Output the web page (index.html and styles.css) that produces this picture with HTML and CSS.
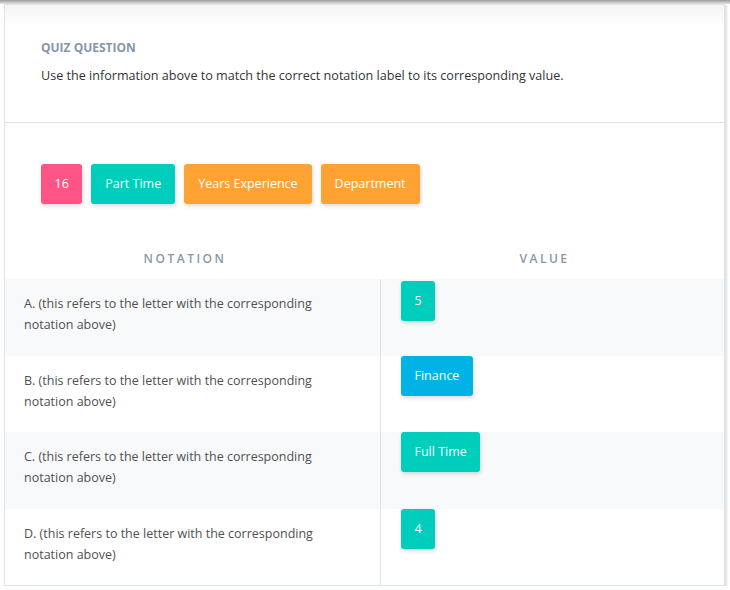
FILE: index.html
```html
<!DOCTYPE html>
<html>
<head>
<meta charset="utf-8">
<link rel="stylesheet" href="styles.css">
</head>
<body>
<div class="topshade"></div>
<div class="card">
  <div class="question">
    <div class="qlabel">QUIZ QUESTION</div>
    <div class="qtext">Use the information above to match the correct notation label to its corresponding value.</div>
  </div>
  <div class="answers">
    <div class="chips">
      <span class="chip pink">16</span>
      <span class="chip teal">Part Time</span>
      <span class="chip orange">Years Experience</span>
      <span class="chip orange">Department</span>
    </div>
    <div class="table">
      <div class="th">NOTATION</div>
      <div class="th">VALUE</div>

      <div class="cell label alt">A. (this refers to the letter with the corresponding notation above)</div>
      <div class="cell value alt first"><span class="chip teal">5</span></div>

      <div class="cell label">B. (this refers to the letter with the corresponding notation above)</div>
      <div class="cell value"><span class="chip blue">Finance</span></div>

      <div class="cell label alt">C. (this refers to the letter with the corresponding notation above)</div>
      <div class="cell value alt"><span class="chip teal">Full Time</span></div>

      <div class="cell label">D. (this refers to the letter with the corresponding notation above)</div>
      <div class="cell value"><span class="chip teal">4</span></div>
    </div>
  </div>
</div>
</body>
</html>
```
FILE: styles.css
```css
html, body {
  margin: 0;
  padding: 0;
  background: #ffffff;
  font-family: "Open Sans", "Liberation Sans", sans-serif;
}
.topshade {
  height: 4px;
  background: linear-gradient(#9a9a9a, #e4e4e4);
}
.card {
  margin: 0 5px 0 4px;
  border: 1px solid #dde3ea;
  box-shadow: 2px 1px 2px rgba(0,0,0,0.12);
}
.question {
  padding: 35px 36px 36px;
  background: linear-gradient(#f4f4f4 0px, #ffffff 22px);
  border-bottom: 1px solid #dde3ea;
}
.qlabel {
  font-size: 12px;
  font-weight: 700;
  line-height: 16px;
  color: #8396ab;
}
.qtext {
  margin-top: 10px;
  font-size: 12.6px;
  line-height: 20px;
  color: #333333;
}
.answers {
  padding-top: 41px;
}
.chips {
  display: flex;
  gap: 9px;
  padding-left: 36px;
}
.chip {
  display: inline-block;
  height: 40px;
  line-height: 39px;
  padding: 0 14px;
  border-radius: 3px;
  color: #ffffff;
  font-size: 12.5px;
  box-shadow: 1px 2px 4px rgba(0,0,0,0.15);
}
.chips .chip:first-child {
  padding: 0 13.5px;
}
.pink { background: #ff5486; }
.teal { background: #00cdbb; }
.orange { background: #ffa234; }
.blue { background: #00b3e4; }
.table {
  margin-top: 45px;
  display: grid;
  grid-template-columns: 376px 1fr;
}
.th {
  text-align: center;
  padding-right: 16px;
  font-size: 12px;
  font-weight: 600;
  letter-spacing: 2.5px;
  line-height: 20px;
  padding-bottom: 10px;
  color: #8a97a6;
}
.cell {
  min-height: 76.5px;
  box-sizing: border-box;
}
.alt { background: #f8f9fb; }
.label {
  padding: 14px 60px 0 19px;
  font-size: 12.5px;
  line-height: 21px;
  color: #505050;
  border-right: 1px solid #dde3ea;
}
.value {
  padding: 0 0 0 20px;
}
.value .chip {
  padding: 0 13.5px;
}
.first {
  padding-top: 2px;
}
```
